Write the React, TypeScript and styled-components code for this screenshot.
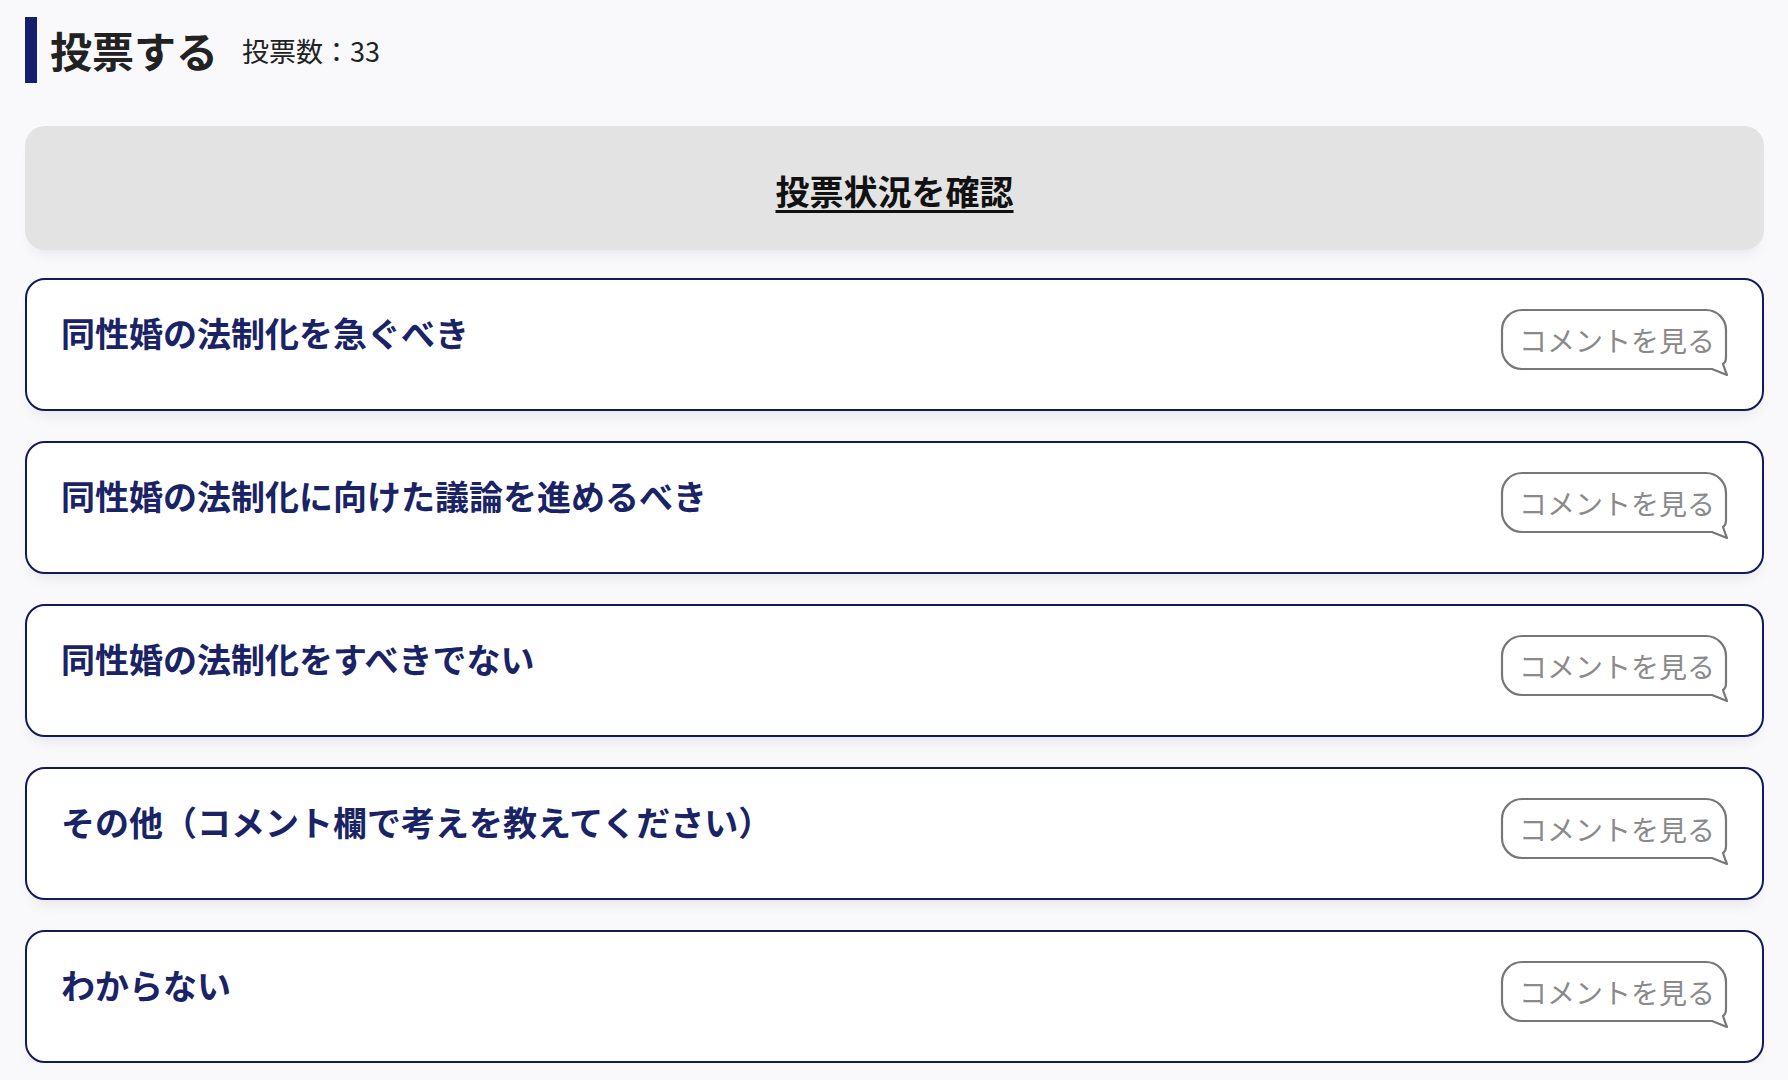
import { styled, createGlobalStyle } from "styled-components";

const options = [
  "同性婚の法制化を急ぐべき",
  "同性婚の法制化に向けた議論を進めるべき",
  "同性婚の法制化をすべきでない",
  "その他（コメント欄で考えを教えてください）",
  "わからない",
];

export default function App() {
  return (
    <>
      <GlobalStyle />
      <Page>
        <Header>
          <Title>投票する</Title>
          <VoteCount>投票数：33</VoteCount>
        </Header>

        <StatusBox>
          <StatusLink href="#">投票状況を確認</StatusLink>
        </StatusBox>

        <OptionList>
          {options.map((label) => (
            <OptionCard key={label}>
              <OptionLabel>{label}</OptionLabel>
              <CommentButton />
            </OptionCard>
          ))}
        </OptionList>
      </Page>
    </>
  );
}

function CommentButton() {
  return (
    <Bubble type="button">
      <svg width="228" height="69" viewBox="0 0 228 69" aria-hidden="true">
        <path
          d="M22 2 H206 A20 20 0 0 1 226 22 V49 Q226 54 223 56 Q225 62 227 67 L212 61 H22 A20 20 0 0 1 2 41 V22 A20 20 0 0 1 22 2 Z"
          fill="#fff"
          stroke="#777"
          strokeWidth="2.2"
          strokeLinejoin="round"
        />
      </svg>
      <span>コメントを見る</span>
    </Bubble>
  );
}

// STYLED COMPONENTS

const GlobalStyle = createGlobalStyle`
  body {
    margin: 0;
    background: #f9f9fc;
    font-family: "Noto Sans CJK JP", "Noto Sans", sans-serif;
  }
`;

const Page = styled.main`
  padding: 17px 24px 0 25px;
`;

const Header = styled.div`
  display: flex;
  align-items: center;
  gap: 24px;
  height: 66px;
  border-left: 12px solid #161f6e;
  padding-left: 13px;
`;

const Title = styled.h1`
  margin: 0;
  font-size: 42px;
  font-weight: 700;
  color: #222;
  line-height: 1;
`;

const VoteCount = styled.span`
  font-size: 27px;
  color: #222;
  line-height: 1;
`;

const StatusBox = styled.div`
  display: flex;
  align-items: center;
  justify-content: center;
  box-sizing: border-box;
  height: 124px;
  margin-top: 43px;
  padding-top: 4px;
  border-radius: 20px;
  background: #e3e3e3;
  box-shadow: 0 10px 14px -6px rgba(0, 0, 0, 0.07);
`;

const StatusLink = styled.a`
  font-size: 34px;
  font-weight: 700;
  color: #111;
  text-decoration: underline;
  text-decoration-thickness: 3px;
  text-underline-offset: 5px;
`;

const OptionList = styled.div`
  display: flex;
  flex-direction: column;
  gap: 30px;
  margin-top: 28px;
`;

const OptionCard = styled.div`
  display: flex;
  align-items: flex-start;
  justify-content: space-between;
  box-sizing: border-box;
  height: 133px;
  padding: 28px 34px 0 34px;
  background: #fff;
  border: 2px solid #121a5c;
  border-radius: 20px;
  box-shadow: 0 10px 14px -6px rgba(0, 0, 0, 0.08);
`;

const OptionLabel = styled.p`
  margin: -1px 0 0;
  font-size: 34px;
  font-weight: 700;
  line-height: 1.5;
  color: #1a2366;
`;

const Bubble = styled.button`
  position: relative;
  flex-shrink: 0;
  width: 228px;
  height: 69px;
  padding: 0;
  border: none;
  background: none;
  cursor: pointer;
  font-family: inherit;

  & svg {
    position: absolute;
    inset: 0;
  }

  & span {
    position: absolute;
    left: 6px;
    right: 0;
    top: 1px;
    height: 62px;
    display: flex;
    align-items: center;
    justify-content: center;
    font-size: 28px;
    color: #8a8a8a;
  }
`;
